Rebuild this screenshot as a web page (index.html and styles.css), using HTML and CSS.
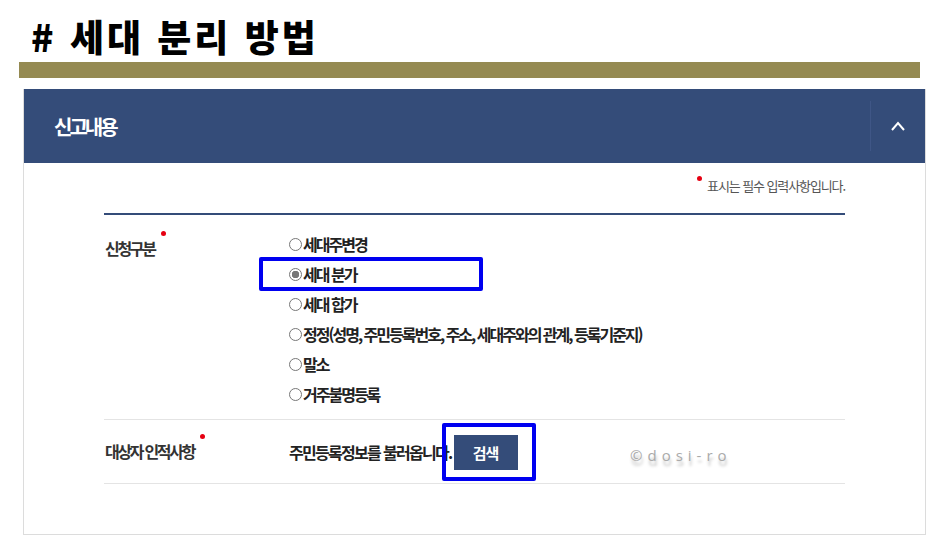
FILE: index.html
```html
<!DOCTYPE html>
<html lang="ko">
<head>
    <meta charset="UTF-8">
    <meta name="viewport" content="width=device-width, initial-scale=1.0">
    <title>세대 분리 방법</title>
    <link rel="stylesheet" href="styles.css">
</head>
<body>

<h1 class="title"># 세대 분리 방법</h1>
<div class="title-bar"></div>

<div class="panel">
    <div class="panel-head">
        <h2>신고내용</h2>
        <button type="button" class="toggle" aria-label="접기">
            <svg width="16" height="12" viewBox="0 0 16 12">
                <path d="M2 10 L8 3 L14 10" fill="none" stroke="#fff" stroke-width="2"/>
            </svg>
        </button>
    </div>

    <div class="panel-body">
        <p class="required-note"><span class="dot"></span>표시는 필수 입력사항입니다.</p>

        <div class="form-table">
            <div class="row">
                <div class="label">신청구분<span class="dot"></span></div>
                <div class="field">
                    <label class="option"><input type="radio" name="kind">세대주변경</label>
                    <label class="option picked"><input type="radio" name="kind" checked>세대 분가</label>
                    <label class="option"><input type="radio" name="kind">세대 합가</label>
                    <label class="option"><input type="radio" name="kind">정정(성명, 주민등록번호, 주소, 세대주와의 관계, 등록기준지)</label>
                    <label class="option"><input type="radio" name="kind">말소</label>
                    <label class="option"><input type="radio" name="kind">거주불명등록</label>
                </div>
            </div>

            <div class="row row-search">
                <div class="label">대상자 인적사항<span class="dot"></span></div>
                <div class="field field-inline">
                    <span class="lookup-text">주민등록정보를 불러옵니다.</span>
                    <span class="btn-mark">
                        <button type="button" class="btn-search">검색</button>
                    </span>
                </div>
                <span class="watermark">©dosi-ro</span>
            </div>
        </div>
    </div>
</div>

</body>
</html>
```

FILE: styles.css
```css
body {
    margin: 0;
    font-family: "Noto Sans CJK KR", "Noto Sans", sans-serif;
    background-color: #fff;
    color: #333;
}

.title {
    margin: 0;
    padding: 16px 0 0 31px;
    font-size: 37px;
    line-height: 40px;
    font-weight: 900;
    letter-spacing: 3px;
    color: #000;
}

.title-bar {
    margin: 6px 0 0 19px;
    width: 901px;
    height: 16px;
    background-color: #958a52;
}

.panel {
    margin: 11px 0 0 23px;
    width: 901px;
    height: 445px;
    border: 1px solid #dcdcdc;
    border-top: none;
}

.panel-head {
    height: 74px;
    background-color: #344c79;
    display: flex;
    align-items: center;
    justify-content: space-between;
    padding-left: 30px;
}

.panel-head h2 {
    margin: 0;
    font-size: 20px;
    font-weight: 700;
    letter-spacing: -3px;
    color: #fff;
}

.toggle {
    width: 55px;
    height: 50px;
    border: none;
    border-left: 1px solid #3f5686;
    background: transparent;
    display: flex;
    align-items: center;
    justify-content: center;
    padding: 0;
}

.panel-body {
    padding: 0 80px;
}

.required-note {
    margin: 0;
    padding-top: 14px;
    height: 36px;
    text-align: right;
    font-size: 13px;
    line-height: 18px;
    letter-spacing: -1.1px;
    color: #555;
}

.dot {
    display: inline-block;
    width: 5px;
    height: 5px;
    border-radius: 50%;
    background-color: #e60012;
    vertical-align: top;
}

.required-note .dot {
    margin: -1px 5px 0 0;
}

.form-table {
    border-top: 2px solid #344c79;
}

.row {
    display: flex;
    border-bottom: 1px solid #e4e4e4;
    position: relative;
}

.label {
    width: 184px;
    padding: 23px 0 0 1px;
    font-size: 16px;
    line-height: 20px;
    font-weight: 700;
    letter-spacing: -2.3px;
    color: #333;
}

.label .dot {
    margin: -7px 0 0 6px;
}

.field {
    padding: 14px 0 10px;
    display: flex;
    flex-direction: column;
}

.option {
    display: flex;
    align-items: center;
    height: 30px;
    font-size: 16px;
    font-weight: 700;
    letter-spacing: -2px;
    color: #222;
}

.option input {
    appearance: none;
    width: 13px;
    height: 13px;
    margin: 1px 1px 0 0;
    border: 1px solid #777;
    border-radius: 50%;
    background: #fff;
}

.option input:checked {
    background: radial-gradient(circle, #777 0 3.5px, #fff 4px);
}

.picked {
    position: relative;
}

.picked::before {
    content: "";
    position: absolute;
    left: -30px;
    top: -2px;
    width: 216px;
    height: 26px;
    border: 4px solid #0000f0;
    border-radius: 2px;
}

.row-search .label {
    padding: 21px 0 0 1px;
    height: 42px;
}

.field-inline {
    flex-direction: row;
    align-items: center;
    padding: 0;
}

.lookup-text {
    font-size: 16px;
    font-weight: 700;
    letter-spacing: -1.7px;
    color: #222;
}

.btn-mark {
    margin-left: -10px;
    padding: 8px 14px 7px 8px;
    border: 4px solid #0000f0;
    border-radius: 2px;
    display: flex;
}

.btn-search {
    width: 64px;
    height: 35px;
    border: none;
    background-color: #344c79;
    color: #fff;
    font-family: inherit;
    font-size: 15px;
    font-weight: 700;
    letter-spacing: -1px;
}

.watermark {
    position: absolute;
    left: 526px;
    top: 25px;
    font-family: "Open Sans", sans-serif;
    font-size: 15px;
    letter-spacing: 5px;
    color: #aaa;
    text-shadow: 1px 5px 3px rgba(0, 0, 0, 0.25);
}
```
